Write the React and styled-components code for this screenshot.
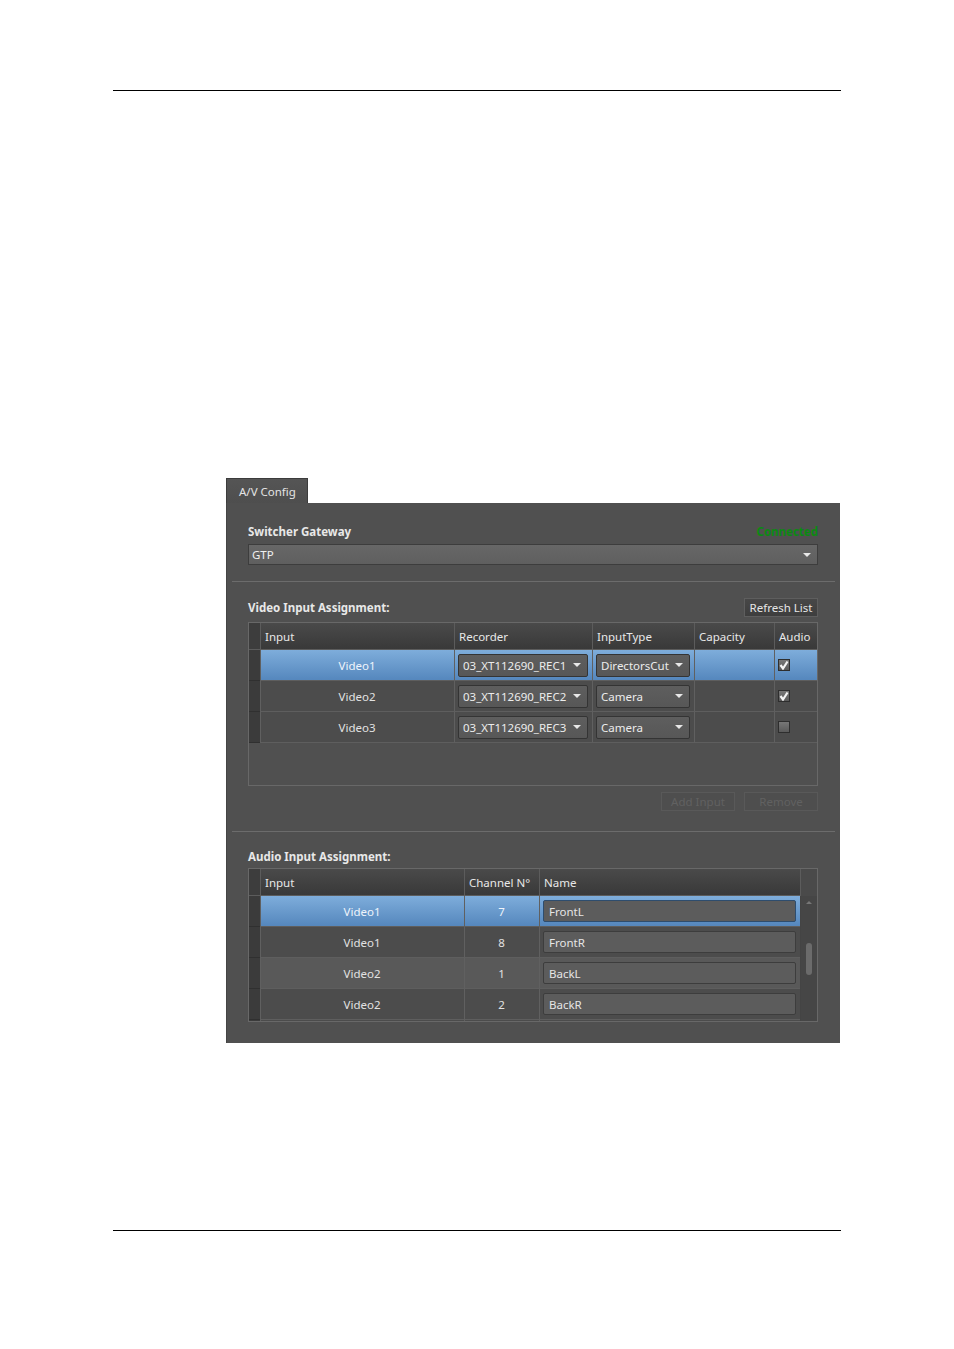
import React from "react";
import styled, { createGlobalStyle } from "styled-components";

const GlobalStyle = createGlobalStyle`
  html, body { margin: 0; padding: 0; background: #fff; }
  * { box-sizing: border-box; }
  body { font-family: "Noto Sans", "Open Sans", sans-serif; }
`;

const Page = styled.div`
  width: 954px;
  height: 1349px;
  background: #fff;
  overflow: hidden;
`;

const Rule = styled.div`
  margin: ${(p) => p.top}px 0 0 113px;
  width: 728px;
  height: 1px;
  background: #000;
`;

const Window = styled.div`
  margin: 387px 0 0 226px;
  width: 614px;
`;

const Tab = styled.div`
  width: 82px;
  height: 25px;
  background: linear-gradient(#555, #4e4e4e);
  border: 1px solid #3c3c3c;
  border-bottom: none;
  color: #e4e4e4;
  font-size: 11.5px;
  line-height: 25px;
  padding-left: 12px;
`;

const Panel = styled.div`
  height: 540px;
  background: #505050;
  border-left: 1px solid #444;
  padding: 20px 22px 0 21px;
  color: #e2e2e2;
  font-size: 11.5px;
`;

const TitleRow = styled.div`
  display: flex;
  align-items: center;
  justify-content: space-between;
  height: ${(p) => p.h || 16}px;
  margin-top: ${(p) => p.mt || 0}px;
`;

const Title = styled.div`
  font-weight: 700;
  color: #e8e8e8;
`;

const Status = styled.div`
  font-weight: 700;
  color: #0b8a12;
`;

const Combo = styled.div`
  display: flex;
  align-items: center;
  justify-content: space-between;
  height: 21px;
  margin-top: 5px;
  padding: 0 6px 0 3px;
  background: linear-gradient(#676767, #5f5f5f);
  border: 1px solid #3d3d3d;
  color: #f0f0f0;
`;

const Arrow = styled.span`
  width: 0;
  height: 0;
  border-left: 4px solid transparent;
  border-right: 4px solid transparent;
  border-top: 4px solid #e8e8e8;
`;

const Separator = styled.div`
  height: 1px;
  background: #6c6c6c;
  margin: ${(p) => p.mt}px -17px 0 -16px;
`;

const Button = styled.div`
  width: 74px;
  height: 19px;
  display: flex;
  align-items: center;
  justify-content: center;
  border: 1px solid ${(p) => (p.disabled ? "#595959" : "#5e5e5e")};
  background: ${(p) => (p.disabled ? "#4e4e4e" : "linear-gradient(#474747, #3e3e3e)")};
  color: ${(p) => (p.disabled ? "#616161" : "#e6e6e6")};
`;

const ButtonRow = styled.div`
  display: flex;
  justify-content: flex-end;
  gap: 9px;
  margin-top: 6px;
`;

const Table = styled.div`
  margin-top: ${(p) => p.mt}px;
  height: ${(p) => p.h}px;
  border: 1px solid #686868;
  overflow: hidden;
  display: grid;
  grid-template-columns: ${(p) => p.cols};
  grid-auto-rows: 31px;
  grid-template-rows: 27px;
  align-content: start;
`;

const Head = styled.div`
  background: linear-gradient(#4a4a4a, #393939);
  border-left: 1px solid #5c5c5c;
  border-bottom: 1px solid #5c5c5c;
  color: #e8e8e8;
  display: flex;
  align-items: center;
  padding-left: 4px;
  &:first-child { border-left: none; background: #3d3d3d; }
`;

const Cell = styled.div`
  display: flex;
  align-items: center;
  justify-content: ${(p) => (p.center ? "center" : "flex-start")};
  padding: 0 4px 0 3px;
  border-left: 1px solid #606060;
  border-bottom: 1px solid #5e5e5e;
  color: ${(p) => (p.sel ? "#eef4fb" : "#e2e2e2")};
  background: ${(p) =>
    p.sel ? "linear-gradient(#7eaddb, #5587bd)" : p.hover ? "#595959" : "#4c4c4c"};
`;

const RowHead = styled.div`
  grid-column: 1;
  background: #3b3b3b;
  border-bottom: 1px solid #303030;
`;

const CellCombo = styled.div`
  flex: 1;
  height: 23px;
  display: flex;
  align-items: center;
  justify-content: space-between;
  padding: 0 6px 0 4px;
  background: linear-gradient(#5e5e5e, #575757);
  border: 1px solid #343434;
  border-radius: 2px;
  color: #ececec;
`;

const Field = styled.div`
  flex: 1;
  height: 22px;
  display: flex;
  align-items: center;
  padding-left: 5px;
  background: #5c5c5c;
  border: 1px solid ${(p) => (p.sel ? "#2e4d6e" : "#3d3d3d")};
  border-radius: 2px;
  color: #e6e6e6;
`;

const Check = styled.div`
  width: 12px;
  height: 12px;
  border: 1px solid #2e2e2e;
  background: linear-gradient(#777, #5a5a5a);
  display: flex;
  align-items: center;
  justify-content: center;
`;

const ScrollHead = styled.div`
  background: #4a4a4a;
  border-left: 1px solid #5c5c5c;
  grid-column: 5;
  grid-row: 1;
`;

const ScrollTrack = styled.div`
  grid-column: 5;
  grid-row: 2 / span 5;
  background: #464646;
  border-left: 1px solid #444;
  position: relative;
`;

const ScrollThumb = styled.div`
  position: absolute;
  left: 5px;
  top: 47px;
  width: 6px;
  height: 32px;
  border-radius: 3px;
  background: #6b6b6b;
`;

const ScrollArrow = styled.div`
  position: absolute;
  left: 5px;
  ${(p) => (p.up ? "top: 5px;" : "bottom: 4px;")}
  width: 0;
  height: 0;
  border-left: 3px solid transparent;
  border-right: 3px solid transparent;
  ${(p) => (p.up ? "border-bottom: 3px solid #777;" : "border-top: 3px solid #777;")}
`;

const Filler = styled.div`
  grid-column: 1 / -1;
  height: 44px;
  background: #505050;
`;

const Tick = () => (
  <svg width="10" height="10" viewBox="0 0 10 10">
    <path d="M1.5 5 L4 8.5 L8.5 1.5" stroke="#f4f4f4" strokeWidth="2.2" fill="none" />
  </svg>
);

const videoRows = [
  { input: "Video1", rec: "03_XT112690_REC1", type: "DirectorsCut", audio: true, sel: true },
  { input: "Video2", rec: "03_XT112690_REC2", type: "Camera", audio: true },
  { input: "Video3", rec: "03_XT112690_REC3", type: "Camera", audio: false },
];

const audioRows = [
  { input: "Video1", ch: "7", name: "FrontL", sel: true },
  { input: "Video1", ch: "8", name: "FrontR" },
  { input: "Video2", ch: "1", name: "BackL", hover: true },
  { input: "Video2", ch: "2", name: "BackR" },
  { input: "", ch: "", name: "" },
];

export default function App() {
  return (
    <Page>
      <GlobalStyle />
      <Rule top={90} />
      <Window>
        <Tab>A/V Config</Tab>
        <Panel>
          <TitleRow>
            <Title>Switcher Gateway</Title>
            <Status>Connected</Status>
          </TitleRow>
          <Combo>
            GTP
            <Arrow />
          </Combo>
          <Separator mt={16} />

          <TitleRow h={19} mt={16}>
            <Title>Video Input Assignment:</Title>
            <Button>Refresh List</Button>
          </TitleRow>
          <Table mt={5} h={164} cols="11px 194px 138px 102px 80px 43px">
            <Head />
            <Head>Input</Head>
            <Head>Recorder</Head>
            <Head>InputType</Head>
            <Head>Capacity</Head>
            <Head>Audio</Head>
            {videoRows.map((r) => (
              <React.Fragment key={r.input}>
                <RowHead />
                <Cell sel={r.sel} center>
                  {r.input}
                </Cell>
                <Cell sel={r.sel}>
                  <CellCombo>
                    {r.rec}
                    <Arrow />
                  </CellCombo>
                </Cell>
                <Cell sel={r.sel}>
                  <CellCombo>
                    {r.type}
                    <Arrow />
                  </CellCombo>
                </Cell>
                <Cell sel={r.sel} />
                <Cell sel={r.sel}>
                  <Check>{r.audio && <Tick />}</Check>
                </Cell>
              </React.Fragment>
            ))}
            <Filler />
          </Table>
          <ButtonRow>
            <Button disabled>Add Input</Button>
            <Button disabled>Remove</Button>
          </ButtonRow>
          <Separator mt={20} />

          <TitleRow mt={16}>
            <Title>Audio Input Assignment:</Title>
          </TitleRow>
          <Table mt={4} h={154} cols="11px 204px 75px 261px 17px">
            <Head />
            <Head>Input</Head>
            <Head>Channel N°</Head>
            <Head>Name</Head>
            <ScrollHead />
            {audioRows.map((r, i) => (
              <React.Fragment key={i}>
                <RowHead />
                <Cell sel={r.sel} hover={r.hover} center>
                  {r.input}
                </Cell>
                <Cell sel={r.sel} hover={r.hover} center>
                  {r.ch}
                </Cell>
                <Cell sel={r.sel} hover={r.hover}>
                  {r.name && <Field sel={r.sel}>{r.name}</Field>}
                </Cell>
              </React.Fragment>
            ))}
            <ScrollTrack>
              <ScrollArrow up />
              <ScrollThumb />
              <ScrollArrow />
            </ScrollTrack>
          </Table>
        </Panel>
      </Window>
      <Rule top={187} />
    </Page>
  );
}
